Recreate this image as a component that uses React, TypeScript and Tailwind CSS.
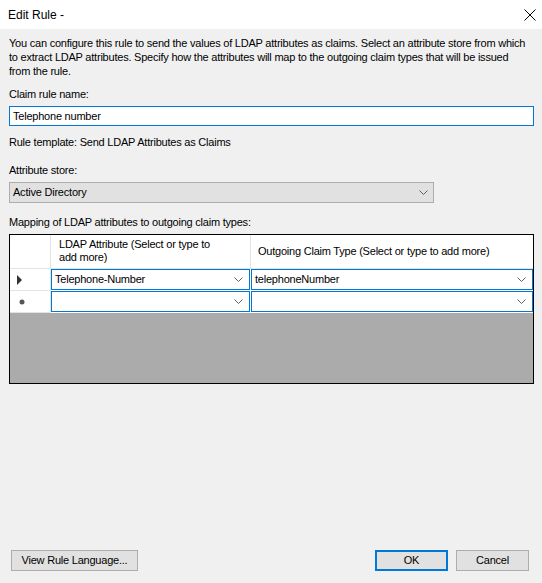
import React from "react";

function Chevron({ className = "" }: { className?: string }) {
  return (
    <svg width="9" height="5" viewBox="0 0 9 5" className={className}>
      <path d="M0.5 0.5 L4.5 4.5 L8.5 0.5" fill="none" stroke="#606060" strokeWidth="1" />
    </svg>
  );
}

function ComboCell({ value }: { value: string }) {
  return (
    <div className="flex h-full items-center justify-between border border-[#0078d7] bg-white pl-[3px] pr-[6px]">
      <span className="whitespace-nowrap">{value}</span>
      <Chevron />
    </div>
  );
}

export default function App() {
  return (
    <div className="flex h-[583px] w-[542px] flex-col bg-[#f0f0f0] font-['Liberation_Sans',Arial,sans-serif] text-[11px] tracking-[-0.22px] text-black">
      {/* Title bar */}
      <div className="flex h-[29px] shrink-0 items-center justify-between bg-white pl-[8px] pr-[6px]">
        <span className="text-[12px] tracking-normal">Edit Rule -</span>
        <svg width="12" height="12" viewBox="0 0 12 12">
          <path d="M0.5 0.5 L11.5 11.5 M11.5 0.5 L0.5 11.5" stroke="#000" strokeWidth="1" />
        </svg>
      </div>

      {/* Body */}
      <div className="flex flex-1 flex-col px-[9px]">
        <p className="mt-[7px] leading-[14px] whitespace-nowrap">
          You can configure this rule to send the values of LDAP attributes as claims. Select an attribute store from which
          <br />
          to extract LDAP attributes. Specify how the attributes will map to the outgoing claim types that will be issued
          <br />
          from the rule.
        </p>

        <div className="mt-[9px] leading-[14px]">Claim rule name:</div>
        <div className="mt-[5px] flex h-[20px] w-[525px] items-center border border-[#0078d7] bg-white px-[3px]">
          Telephone number
        </div>

        <div className="mt-[9px] leading-[14px]">Rule template: Send LDAP Attributes as Claims</div>

        <div className="mt-[14px] leading-[14px]">Attribute store:</div>
        <div className="mt-[5px] flex h-[21px] w-[425px] items-center justify-between border border-[#adadad] bg-[#e1e1e1] pl-[3px] pr-[5px]">
          <span>Active Directory</span>
          <Chevron />
        </div>

        <div className="mt-[12px] leading-[14px]">Mapping of LDAP attributes to outgoing claim types:</div>

        {/* Grid */}
        <div className="mt-[5px] flex h-[150px] w-[525px] flex-col border border-black bg-[#ababab]">
          {/* Header */}
          <div className="flex h-[34px] shrink-0 bg-white">
            <div className="w-[41px] shrink-0 border-r border-b border-[#e3e3e3]" />
            <div className="w-[200px] shrink-0 border-r border-b border-[#e3e3e3] pl-[8px] pt-[3px] leading-[13px]">
              LDAP Attribute (Select or type to
              <br />
              add more)
            </div>
            <div className="flex-1 border-b border-[#e3e3e3] pl-[7px] pt-[10px] leading-[13px]">
              Outgoing Claim Type (Select or type to add more)
            </div>
          </div>
          {/* Row 1 */}
          <div className="flex h-[22px] shrink-0 bg-white">
            <div className="flex w-[41px] shrink-0 items-center border-r border-b border-[#e3e3e3] pl-[7px]">
              <svg width="6" height="10" viewBox="0 0 6 10">
                <path d="M0 0 L5 5 L0 10 Z" fill="#333" />
              </svg>
            </div>
            <div className="w-[200px] shrink-0 pb-[1px] pr-[1px]">
              <ComboCell value="Telephone-Number" />
            </div>
            <div className="flex-1 pb-[1px]">
              <ComboCell value="telephoneNumber" />
            </div>
          </div>
          {/* Row 2 */}
          <div className="flex h-[22px] shrink-0 bg-white">
            <div className="flex w-[41px] shrink-0 items-center border-r border-b border-[#e3e3e3] pl-[9px]">
              <svg width="6" height="6" viewBox="0 0 6 6">
                <circle cx="3" cy="3" r="2.5" fill="#555" />
              </svg>
            </div>
            <div className="w-[200px] shrink-0 pb-[1px] pr-[1px]">
              <ComboCell value="" />
            </div>
            <div className="flex-1 pb-[1px]">
              <ComboCell value="" />
            </div>
          </div>
        </div>

        {/* Buttons */}
        <div className="mt-auto mb-[12px] flex items-center">
          <button className="ml-[2px] flex h-[21px] w-[127px] items-center justify-center border border-[#adadad] bg-[#e1e1e1]">
            View Rule Language...
          </button>
          <div className="flex-1" />
          <button className="flex h-[21px] w-[73px] items-center justify-center border-2 border-[#0078d7] bg-[#e1e1e1]">
            OK
          </button>
          <button className="ml-[8px] mr-[4px] flex h-[21px] w-[73px] items-center justify-center border border-[#adadad] bg-[#e1e1e1]">
            Cancel
          </button>
        </div>
      </div>
    </div>
  );
}
